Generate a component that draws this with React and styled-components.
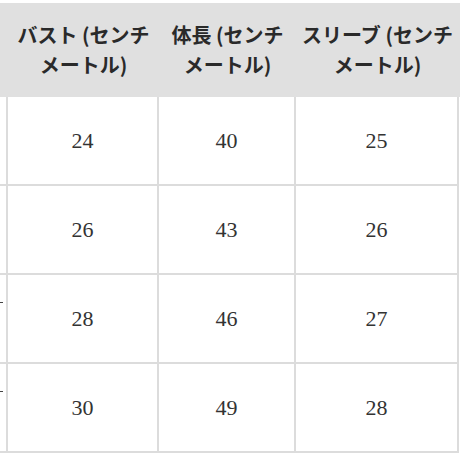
import React from "react";
import styled, { createGlobalStyle } from "styled-components";

const Global = createGlobalStyle`
  html, body { margin: 0; padding: 0; background: #fff; }
  body { width: 460px; height: 460px; overflow: hidden; }
`;

const COLS = "8px 151px 137px 163px 1fr";

const Page = styled.div`
  padding-top: 3px;
  width: 460px;
`;

const HeaderRow = styled.div`
  display: grid;
  grid-template-columns: ${COLS};
  height: 94px;
  background: #e0e0e0;
`;

const HeadCell = styled.div`
  display: flex;
  align-items: center;
  justify-content: center;
  text-align: center;
  font-family: "Noto Sans CJK JP", "Noto Sans", sans-serif;
  font-weight: 700;
  font-size: 20px;
  line-height: 30px;
  color: #2a2a2a;
  white-space: nowrap;
  overflow: hidden;
`;

const BodyRow = styled.div`
  display: grid;
  grid-template-columns: ${COLS};
  height: 89px;
`;

const Cell = styled.div`
  box-sizing: border-box;
  display: flex;
  align-items: center;
  justify-content: center;
  border-right: 2px solid #dcdcdc;
  border-bottom: 2px solid #dcdcdc;
  font-family: "Liberation Serif", "DejaVu Serif", serif;
  font-size: 22px;
  color: #333;
`;

const StubCell = styled(Cell)`
  align-items: flex-start;
  justify-content: flex-start;
  padding-top: 27px;
`;

const Tick = styled.span`
  display: block;
  width: 3px;
  height: 1px;
  background: ${(p) => (p.$show ? "#444" : "transparent")};
`;

const headers = [
  ["バスト (センチ", "メートル)"],
  ["体長 (センチ", "メートル)"],
  ["スリーブ (センチ", "メートル)"],
];

const rows = [
  { tick: false, v: [24, 40, 25] },
  { tick: false, v: [26, 43, 26] },
  { tick: true, v: [28, 46, 27] },
  { tick: true, v: [30, 49, 28] },
];

export default function App() {
  return (
    <Page>
      <Global />
      <HeaderRow>
        <HeadCell />
        {headers.map((h, i) => (
          <HeadCell key={i}>
            <span>
              {h[0]}
              <br />
              {h[1]}
            </span>
          </HeadCell>
        ))}
        <HeadCell />
      </HeaderRow>
      {rows.map((r, i) => (
        <BodyRow key={i}>
          <StubCell>
            <Tick $show={r.tick} />
          </StubCell>
          {r.v.map((n, j) => (
            <Cell key={j}>{n}</Cell>
          ))}
        </BodyRow>
      ))}
    </Page>
  );
}
